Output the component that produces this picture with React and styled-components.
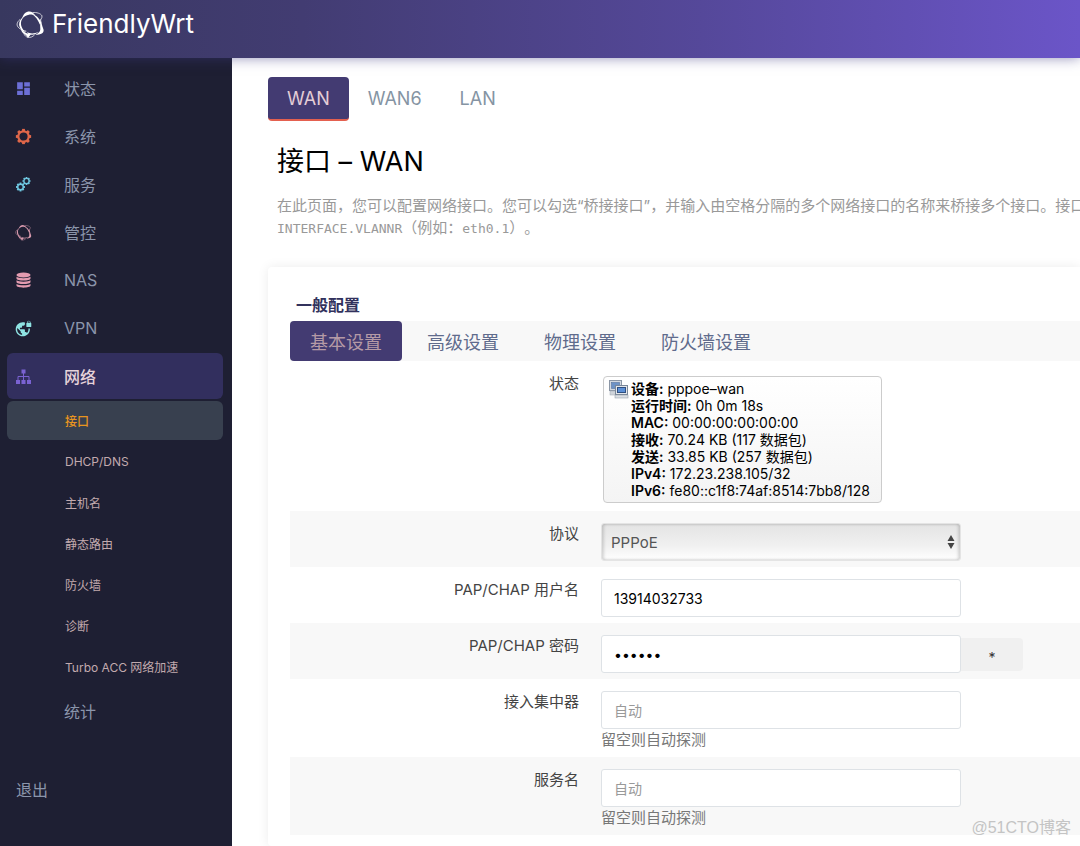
import React, { useState } from "react";
import styled, { createGlobalStyle, css } from "styled-components";
import { MdDashboard, MdVpnLock } from "react-icons/md";

const GlobalStyle = createGlobalStyle`
  * {
    box-sizing: border-box;
  }

  body {
    margin: 0;
    background: #fff;
    color: #000;
    font-family: Inter, "Noto Sans CJK SC", sans-serif;
    font-size: 15px;
    overflow-x: hidden;
  }

  a {
    text-decoration: none;
  }

  button, input, select {
    font-family: inherit;
  }
`;

const Header = styled.header`
  position: relative;
  z-index: 1;
  display: flex;
  align-items: center;
  height: 58px;
  padding: 0 16px 10px;
  background: linear-gradient(90deg, #38385f 0%, #423c72 28%, #55489a 65%, #6b55c8 100%);
  box-shadow: 0 0 12px rgba(60, 55, 130, 0.55);
`;

const Brand = styled.a`
  display: flex;
  align-items: center;
  gap: 7px;
  color: #fff;
  font-size: 26px;
  line-height: 32px;
`;

const Layout = styled.div`
  display: flex;
  min-height: calc(100vh - 58px);
`;

const Sidebar = styled.nav`
  flex: 0 0 232px;
  padding: 7px 9px 8px 7px;
  background: #1e1f33;
`;

const Menu = styled.ul`
  display: flex;
  flex-direction: column;
  gap: 2px;
  margin: 0;
  padding: 0;
  list-style: none;
`;

const MenuLink = styled.a`
  display: grid;
  grid-template-columns: 17px 1fr;
  column-gap: 32px;
  align-items: center;
  height: 46px;
  padding: 0 8px;
  border-radius: 6px;
  color: #8b95ab;
  font-size: 16px;

  ${({ $active }) =>
    $active &&
    css`
      background: #322f5e;
      color: #e6d3da;
      font-weight: 500;
    `}

  svg {
    display: block;
  }
`;

const SubMenu = styled(Menu)`
  padding-top: 2px;
`;

const SubLink = styled.a`
  display: flex;
  align-items: center;
  height: 39px;
  padding-left: 58px;
  border-radius: 6px;
  background: ${({ $active }) => ($active ? "#38404f" : "transparent")};
  color: ${({ $active }) => ($active ? "#e8951f" : "#c2aaae")};
  font-size: 12px;
  font-weight: ${({ $active }) => ($active ? 500 : 400)};
`;

const Logout = styled.a`
  display: block;
  margin-top: 44px;
  padding: 0 9px;
  color: #8b95ab;
  font-size: 16px;
  line-height: 24px;
`;

const Main = styled.main`
  display: flex;
  flex: 1;
  flex-direction: column;
  min-width: 0;
  padding: 19px 0 0 36px;
  overflow: hidden;
`;

const Tabs = styled.div`
  display: flex;
`;

const Tab = styled.button`
  height: 44px;
  padding: 0 19px;
  border: 0;
  border-bottom: 2px solid ${({ $active }) => ($active ? "#e4604f" : "transparent")};
  border-radius: 4px;
  background: ${({ $active }) => ($active ? "#433b72" : "transparent")};
  color: ${({ $active }) => ($active ? "#e3cdd6" : "#8594a3")};
  font-size: 18px;
`;

const Intro = styled.section`
  padding: 22px 0 27px 9px;
`;

const Title = styled.h2`
  margin: 0 0 14px;
  font-size: 27px;
  font-weight: 400;
  line-height: 38px;
`;

const Description = styled.p`
  margin: 0;
  color: #999;
  line-height: 22px;
  white-space: nowrap;
  text-spacing-trim: space-all;

  code {
    font-family: "DejaVu Sans Mono", monospace;
    font-size: 13px;
  }
`;

const Card = styled.section`
  flex: 1;
  padding: 27px 0 10px 22px;
  border-radius: 4px 0 0 4px;
  background: #fff;
  box-shadow: 0 0 12px rgba(0, 0, 0, 0.08);
`;

const CardTitle = styled.h3`
  margin: 0 0 5px;
  padding-left: 6px;
  color: #32325d;
  font-size: 16px;
  line-height: 22px;
`;

const CardTabs = styled.div`
  display: flex;
  gap: 5px;
  background: #f8f8f8;
`;

const CardTab = styled.button`
  height: 40px;
  padding: 0 20px;
  border: 0;
  border-radius: 4px;
  background: ${({ $active }) => ($active ? "#433b72" : "transparent")};
  color: ${({ $active }) => ($active ? "#b59aa6" : "#5f6b8c")};
  font-size: 18px;
`;

const Row = styled.div`
  display: grid;
  grid-template-columns: 289px 1fr;
  column-gap: 22px;
  padding: 12px 0 6px;

  &:nth-of-type(even) {
    background: #f8f8f8;
  }
`;

const Label = styled.label`
  padding-top: 1px;
  color: #444;
  font-size: 15px;
  line-height: 20px;
  text-align: right;
`;

const fieldBox = css`
  width: 100%;
  height: 38px;
  border: 1px solid #dee2e6;
  border-radius: 3px;
`;

const TextInput = styled.input`
  ${fieldBox}
  max-width: 360px;
  padding: 0 12px;
  background: #fff;
  color: #000;
  font-size: 14px;

  &::placeholder {
    color: #999;
  }
`;

const SelectWrap = styled.div`
  position: relative;
  max-width: 360px;

  svg {
    position: absolute;
    top: 12px;
    right: 6px;
    pointer-events: none;
  }
`;

const Select = styled.select`
  ${fieldBox}
  display: block;
  padding: 0 9px;
  appearance: none;
  border-color: #e4e4e4;
  background: linear-gradient(#e4e4e4, #f0f0f0 60%, #fff);
  box-shadow: inset 2px 0 3px rgba(0, 0, 0, 0.15), inset -2px 0 3px rgba(0, 0, 0, 0.15);
  color: #555;
  font-size: 15px;
`;

const FieldLine = styled.div`
  display: flex;
  align-items: center;

  ${TextInput} {
    flex: 0 1 360px;
  }
`;

const RevealButton = styled.button`
  width: 62px;
  height: 33px;
  padding: 6px 0 0;
  border: 0;
  border-radius: 0 4px 4px 0;
  background: #f0f0f0;
  color: #333;
  font-size: 14px;
`;

const Hint = styled.p`
  margin: 0;
  color: #777;
  line-height: 22px;
`;

const StatusBox = styled.div`
  display: inline-grid;
  grid-template-columns: 20px auto;
  column-gap: 2px;
  justify-self: start;
  margin: 3px 0 2px 2px;
  padding: 3px 11px 3px 5px;
  border: 1px solid #ccc;
  border-radius: 4px;
  background: linear-gradient(#fff, #f4f4f4);
  font-size: 14px;
  line-height: 17px;

  p {
    margin: 0;
  }

  strong {
    font-weight: 600;
  }
`;

const Watermark = styled.span`
  position: absolute;
  right: 9px;
  bottom: 8px;
  color: #c4c4c4;
  font-family: "Liberation Sans", "Noto Sans CJK SC", sans-serif;
  font-size: 16px;
`;

const Page = styled.div`
  position: relative;
`;

const KnotIcon = ({ size = 28, color = "#fff" }) => (
  <svg width={size} height={size} viewBox="0 0 28 28" fill={color}>
    <path d="M6 8C7 4 9.500 1.500 13 1.500C15 1.500 17 3 19 5.500C16.500 4.500 14.500 4.300 12.500 4.500C10 4.800 8 6 6 8Z" />
    <path d="M15 3.500C19 4.500 22.500 7.500 24.500 12.500L23 14C21.500 9.500 19 6.500 15 3.500Z" />
    <path d="M24 8C24.500 12 25 15 26.500 18.500C27.500 22 24 24 18.500 24C21.500 22.500 23.500 21 23.500 18.500C23.400 15 23 11.500 24 8Z" />
    <path d="M22 21C19 24 15 24.500 11.500 23L10.500 21.500C14 23 18 23 22 21Z" />
    <path d="M4.500 17C6.500 20.500 9 23 14.500 23.500L11.500 27C10.500 24.500 8.500 23.500 7 22.500C5.500 21.500 4.800 19.500 4.500 17Z" />
    <path d="M8.500 5.500C5 9 4 12 5.500 16.500C6.500 19 8 20.500 10 21.500C6 20.500 3.500 18 3 14.500C2.800 11 4.500 8 8.500 5.500Z" />
    <g fill="none" stroke={color} strokeWidth="0.700">
      <path d="M4 9C0.500 12 0 15 3 17.500C5 19 7 20 10 20.500" />
      <path d="M16 2.500C20 2 24 3.500 25 5.500C25.500 7.500 24 9.500 22.500 11" />
      <path d="M7.500 22.500C9 27 14 28 18 24" />
    </g>
  </svg>
);

const Gear = ({ cx, cy, r, w }) => (
  <g fill="none" stroke="currentColor">
    <circle cx={cx} cy={cy} r={r} strokeWidth={w} />
    {[0, 45, 90, 135, 180, 225, 270, 315].map((angle) => (
      <line
        key={angle}
        x1={cx}
        y1={cy - r}
        x2={cx}
        y2={cy - r - w * 1.1}
        strokeWidth={w * 1.3}
        transform={`rotate(${angle} ${cx} ${cy})`}
      />
    ))}
  </g>
);

const GearIcon = () => (
  <svg width="17" height="17" viewBox="0 0 17 17" color="#e0674a">
    <Gear cx={8.5} cy={8.5} r={5.2} w={2.2} />
  </svg>
);

const GearsIcon = () => (
  <svg width="17" height="17" viewBox="0 0 17 17" color="#6fc6e0">
    <Gear cx={5.5} cy={11} r={2.8} w={1.5} />
    <Gear cx={11.5} cy={5} r={2.6} w={1.3} />
  </svg>
);

const DisksIcon = () => (
  <svg width="17" height="17" viewBox="0 0 17 17" fill="#e39bb0">
    <ellipse cx="8.500" cy="3" rx="7" ry="2.600" />
    {[0, 3.6, 7.2].map((y) => (
      <path
        key={y}
        transform={`translate(0 ${y})`}
        d="M1.500 4.700C3 6.600 14 6.600 15.500 4.700V6.400C15.500 9.200 1.500 9.200 1.500 6.400Z"
      />
    ))}
  </svg>
);

const TreeIcon = () => (
  <svg width="17" height="17" viewBox="0 0 17 17" fill="#7a62d2">
    <rect x="6.500" y="1.500" width="4" height="4" />
    <rect x="1" y="12" width="4" height="4" />
    <rect x="6.500" y="12" width="4" height="4" />
    <rect x="12" y="12" width="4" height="4" />
    <path d="M3 12V8.500H14V12M8.500 5V12" fill="none" stroke="#7a62d2" />
  </svg>
);

const ComputersIcon = () => (
  <svg width="20" height="19" viewBox="0 0 20 19">
    <rect x="0.500" y="0.500" width="12" height="10" fill="#d4d9e0" stroke="#8b96a5" />
    <rect x="2.500" y="2.500" width="8" height="6" fill="#6d92c6" stroke="#4a6896" strokeWidth="0.500" />
    <rect x="1" y="11" width="9" height="4" fill="#cfd4da" stroke="#a0a8b3" strokeWidth="0.500" />
    <rect x="6.500" y="5.500" width="12" height="9" fill="#e4e7eb" stroke="#7a8798" />
    <rect x="8.500" y="7.500" width="8" height="5" fill="#5b8fd6" stroke="#2f4f80" />
    <rect x="6" y="15" width="13" height="3" fill="#dcdfe3" stroke="#8b96a5" strokeWidth="0.500" />
  </svg>
);

const ArrowsIcon = () => (
  <svg width="8" height="14" viewBox="0 0 8 14" fill="#444">
    <path d="M4 0L7.500 6H0.500Z M4 14L7.500 8H0.500Z" />
  </svg>
);

const menu = [
  { name: "状态", icon: <MdDashboard size={17} color="#6c6fd6" /> },
  { name: "系统", icon: <GearIcon /> },
  { name: "服务", icon: <GearsIcon /> },
  { name: "管控", icon: <KnotIcon size={17} color="#d99aae" /> },
  { name: "NAS", icon: <DisksIcon /> },
  { name: "VPN", icon: <MdVpnLock size={17} color="#8fe3e3" /> },
  {
    name: "网络",
    icon: <TreeIcon />,
    items: ["接口", "DHCP/DNS", "主机名", "静态路由", "防火墙", "诊断", "Turbo ACC 网络加速"],
  },
  { name: "统计", icon: <span /> },
];

const status = [
  ["设备", "pppoe–wan"],
  ["运行时间", "0h 0m 18s"],
  ["MAC", "00:00:00:00:00:00"],
  ["接收", "70.24 KB (117 数据包)"],
  ["发送", "33.85 KB (257 数据包)"],
  ["IPv4", "172.23.238.105/32"],
  ["IPv6", "fe80::c1f8:74af:8514:7bb8/128"],
];

const interfaces = ["WAN", "WAN6", "LAN"];
const sections = ["基本设置", "高级设置", "物理设置", "防火墙设置"];

export default function App() {
  const [current, setCurrent] = useState("WAN");
  const [section, setSection] = useState("基本设置");
  const [showPassword, setShowPassword] = useState(false);

  return (
    <Page>
      <GlobalStyle />
      <Header>
        <Brand href="#">
          <KnotIcon size={29} />
          FriendlyWrt
        </Brand>
      </Header>
      <Layout>
        <Sidebar>
          <Menu>
            {menu.map(({ name, icon, items }) => (
              <li key={name}>
                <MenuLink href="#" $active={Boolean(items)}>
                  {icon}
                  {name}
                </MenuLink>
                {items && (
                  <SubMenu>
                    {items.map((item) => (
                      <li key={item}>
                        <SubLink href="#" $active={item === "接口"}>
                          {item}
                        </SubLink>
                      </li>
                    ))}
                  </SubMenu>
                )}
              </li>
            ))}
          </Menu>
          <Logout href="#">退出</Logout>
        </Sidebar>
        <Main>
          <Tabs>
            {interfaces.map((name) => (
              <Tab key={name} $active={name === current} onClick={() => setCurrent(name)}>
                {name}
              </Tab>
            ))}
          </Tabs>
          <Intro>
            <Title>接口 – {current}</Title>
            <Description>
              在此页面，您可以配置网络接口。您可以勾选“桥接接口”，并输入由空格分隔的多个网络接口的名称来桥接多个接口。接口名
              <br />
              <code>INTERFACE.VLANNR</code>（例如：<code>eth0.1</code>）。
            </Description>
          </Intro>
          <Card>
            <CardTitle>一般配置</CardTitle>
            <CardTabs>
              {sections.map((name) => (
                <CardTab key={name} $active={name === section} onClick={() => setSection(name)}>
                  {name}
                </CardTab>
              ))}
            </CardTabs>
            <form>
              <Row>
                <Label as="span">状态</Label>
                <StatusBox>
                  <ComputersIcon />
                  <div>
                    {status.map(([key, value]) => (
                      <p key={key}>
                        <strong>{key}:</strong> {value}
                      </p>
                    ))}
                  </div>
                </StatusBox>
              </Row>
              <Row>
                <Label htmlFor="proto">协议</Label>
                <SelectWrap>
                  <Select id="proto">
                    <option>PPPoE</option>
                  </Select>
                  <ArrowsIcon />
                </SelectWrap>
              </Row>
              <Row>
                <Label htmlFor="username">PAP/CHAP 用户名</Label>
                <TextInput id="username" defaultValue="13914032733" />
              </Row>
              <Row>
                <Label htmlFor="password">PAP/CHAP 密码</Label>
                <FieldLine>
                  <TextInput
                    id="password"
                    type={showPassword ? "text" : "password"}
                    defaultValue="123456"
                  />
                  <RevealButton
                    type="button"
                    onClick={() => setShowPassword(!showPassword)}
                  >
                    *
                  </RevealButton>
                </FieldLine>
              </Row>
              <Row>
                <Label htmlFor="ac">接入集中器</Label>
                <div>
                  <TextInput id="ac" placeholder="自动" />
                  <Hint>留空则自动探测</Hint>
                </div>
              </Row>
              <Row>
                <Label htmlFor="service">服务名</Label>
                <div>
                  <TextInput id="service" placeholder="自动" />
                  <Hint>留空则自动探测</Hint>
                </div>
              </Row>
            </form>
          </Card>
        </Main>
      </Layout>
      <Watermark>@51CTO博客</Watermark>
    </Page>
  );
}
